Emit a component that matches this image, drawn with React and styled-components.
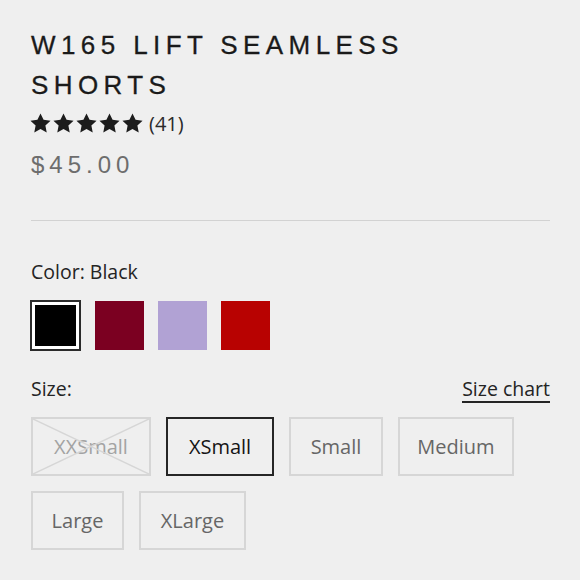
import React, { useState } from 'react'
import styled, { createGlobalStyle } from 'styled-components'

const GlobalStyle = createGlobalStyle`
    body {
        margin: 0;
        background: #efefef;
    }
`

const colors = [
    { name: 'Black', value: '#000000' },
    { name: 'Burgundy', value: '#7b0021' },
    { name: 'Lavender', value: '#b1a2d4' },
    { name: 'Red', value: '#b80201' },
]

const sizes = [
    { label: 'XXSmall', width: 120, soldOut: true },
    { label: 'XSmall', width: 108 },
    { label: 'Small', width: 94 },
    { label: 'Medium', width: 116 },
    { label: 'Large', width: 93 },
    { label: 'XLarge', width: 107 },
]

// Styled components
const Main = styled.div`
    width: 580px;
    height: 580px;
    box-sizing: border-box;
    padding: 25px 30px 0 31px;
    background: #efefef;
    font-family: 'Open Sans', 'Lato', sans-serif;
    color: #1c1c1c;
    overflow: hidden;
`
const Title = styled.h1`
    margin: 0;
    font-family: 'Liberation Sans', 'Inter', sans-serif;
    font-weight: 400;
    font-size: 26px;
    line-height: 40px;
    letter-spacing: 5.4px;
    color: #1a1a1a;
    -webkit-text-stroke: 0.3px #1a1a1a;
`
const Rating = styled.div`
    display: flex;
    align-items: center;
    gap: 0;
    margin-top: 5px;
    margin-left: -2px;
    height: 26px;
`
const Count = styled.span`
    margin-left: 5px;
    font-size: 20px;
    color: #2a2a2a;
`
const Price = styled.div`
    margin-top: 15px;
    font-family: 'Liberation Sans', sans-serif;
    font-size: 24px;
    letter-spacing: 5px;
    color: #6d6d6d;
`
const Divider = styled.hr`
    margin: 41px 0 0;
    border: none;
    border-top: 1px solid #d2d2d2;
`
const Label = styled.div`
    font-size: 19.5px;
    color: #242424;
`
const ColorLabel = styled(Label)`
    margin-top: 37px;
`
const Swatches = styled.div`
    display: flex;
    gap: 14px;
    margin-top: 15px;
`
const Swatch = styled.button`
    width: ${(props) => (props.selected ? '51px' : '49px')};
    height: ${(props) => (props.selected ? '51px' : '49px')};
    margin-top: ${(props) => (props.selected ? '0' : '1px')};
    margin-left: ${(props) => (props.selected ? '-1px' : '0')};
    padding: 0;
    box-sizing: border-box;
    border: ${(props) => (props.selected ? '2px solid #2b2b2b' : 'none')};
    background: ${(props) => (props.selected ? '#ffffff' : props.color)};
    cursor: pointer;
    display: flex;
    align-items: center;
    justify-content: center;
`
const SwatchInner = styled.span`
    width: 41px;
    height: 41px;
    background: ${(props) => props.color};
`
const SizeHeader = styled.div`
    display: flex;
    justify-content: space-between;
    align-items: baseline;
    margin-top: 24px;
`
const SizeChart = styled.a`
    font-size: 19.5px;
    color: #242424;
    text-decoration: none;
    border-bottom: 2px solid #242424;
    line-height: 24px;
`
const SizeGrid = styled.div`
    display: flex;
    flex-wrap: wrap;
    gap: 15px;
    margin-top: 14px;
    width: 500px;
`
const SizeButton = styled.button`
    position: relative;
    width: ${(props) => props.width}px;
    height: 59px;
    padding: 0;
    box-sizing: border-box;
    background: transparent;
    border: ${(props) => (props.selected ? '2px solid #262626' : '2px solid #d6d6d6')};
    font-family: 'Open Sans', 'Lato', sans-serif;
    font-size: 20px;
    color: ${(props) => (props.selected ? '#151515' : props.soldOut ? '#a3a3a3' : '#666666')};
    cursor: pointer;
    overflow: hidden;
`
const Cross = styled.svg`
    position: absolute;
    inset: 0;
    width: 100%;
    height: 100%;
`

const Star = () => (
    <svg width="23" height="23" viewBox="0 0 24 24">
        <path
            d="M12 1.5l3.2 6.7 7.3.9-5.4 5 1.4 7.3L12 17.8l-6.5 3.6 1.4-7.3-5.4-5 7.3-.9z"
            fill="#1c1c1c"
        />
    </svg>
)

const App = () => {
    const [activeColor, setActiveColor] = useState(0)
    const [activeSize, setActiveSize] = useState(1)
    return (
        <Main>
            <GlobalStyle />
            <Title>
                W165 LIFT SEAMLESS
                <br />
                SHORTS
            </Title>
            <Rating>
                {[0, 1, 2, 3, 4].map((i) => (
                    <Star key={i} />
                ))}
                <Count>(41)</Count>
            </Rating>
            <Price>$45.00</Price>
            <Divider />
            <ColorLabel>Color: {colors[activeColor].name}</ColorLabel>
            <Swatches>
                {colors.map((c, index) => (
                    <Swatch
                        key={c.name}
                        color={c.value}
                        selected={activeColor === index}
                        onClick={() => setActiveColor(index)}
                    >
                        {activeColor === index && <SwatchInner color={c.value} />}
                    </Swatch>
                ))}
            </Swatches>
            <SizeHeader>
                <Label>Size:</Label>
                <SizeChart href="#">Size chart</SizeChart>
            </SizeHeader>
            <SizeGrid>
                {sizes.map((s, index) => (
                    <SizeButton
                        key={s.label}
                        width={s.width}
                        soldOut={s.soldOut}
                        selected={activeSize === index}
                        onClick={() => !s.soldOut && setActiveSize(index)}
                    >
                        {s.label}
                        {s.soldOut && (
                            <Cross preserveAspectRatio="none" viewBox="0 0 100 100">
                                <line x1="0" y1="0" x2="100" y2="100" stroke="#d6d6d6" strokeWidth="1.5" vectorEffect="non-scaling-stroke" />
                                <line x1="100" y1="0" x2="0" y2="100" stroke="#d6d6d6" strokeWidth="1.5" vectorEffect="non-scaling-stroke" />
                            </Cross>
                        )}
                    </SizeButton>
                ))}
            </SizeGrid>
        </Main>
    )
}

export default App
